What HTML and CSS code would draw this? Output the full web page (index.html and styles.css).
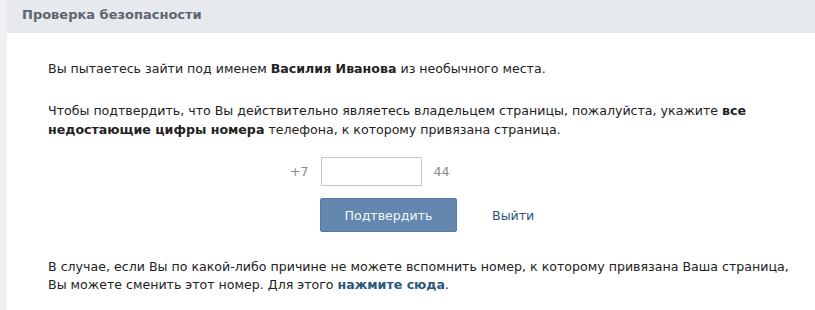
FILE: index.html
```html
<!DOCTYPE html>
<html lang="ru">
<head>
    <meta charset="UTF-8">
    <title>Проверка безопасности</title>
    <link rel="stylesheet" href="styles.css">
</head>
<body>
    <div class="page">
        <div class="box">
            <div class="box-header">Проверка безопасности</div>
            <div class="box-body">
                <p>Вы пытаетесь зайти под именем <b>Василия Иванова</b> из необычного места.</p>
                <p>Чтобы подтвердить, что Вы действительно являетесь владельцем страницы, пожалуйста, укажите <b>все недостающие цифры номера</b> телефона, к которому привязана страница.</p>

                <div class="phone-row">
                    <span class="phone-part">+7</span>
                    <input type="text" class="phone-input">
                    <span class="phone-part">44</span>
                </div>

                <div class="actions">
                    <button type="button" class="btn-confirm">Подтвердить</button>
                    <a href="#" class="link-exit">Выйти</a>
                </div>

                <p class="note">В случае, если Вы по какой-либо причине не можете вспомнить номер, к которому привязана Ваша страница, Вы можете сменить этот номер. Для этого <a href="#" class="link-change">нажмите сюда</a>.</p>
            </div>
        </div>
    </div>
</body>
</html>
```

FILE: styles.css
```css
body {
    margin: 0;
    font-family: "DejaVu Sans", Tahoma, sans-serif;
    font-size: 12.6px;
    color: #222;
    background-color: #fff;
}

.page {
    display: flex;
    min-height: 310px;
    background-color: #f1f1f1;
    padding-left: 7px;
}

.box {
    flex-grow: 1;
    background-color: #fff;
}

.box-header {
    height: 33px;
    box-sizing: border-box;
    padding: 7px 0 0 15px;
    background-color: #e6e9ed;
    color: #5d6670;
    font-weight: bold;
    font-size: 13px;
}

.box-body {
    padding: 26px 0 0 41px;
    width: 745px;
}

.box-body p {
    margin: 0 0 23px;
    line-height: 19px;
}

.phone-row {
    display: flex;
    align-items: center;
    margin: -5px 0 0 242px;
    gap: 12px;
}

.phone-part {
    color: #888;
}

.phone-input {
    width: 101px;
    height: 29px;
    box-sizing: border-box;
    border: 1px solid #c9c9c9;
    margin: 0;
    padding: 0 5px;
}

.actions {
    display: flex;
    align-items: center;
    margin: 12px 0 26px 272px;
}

.btn-confirm {
    width: 137px;
    height: 34px;
    border: 1px solid #567aa3;
    border-radius: 2px;
    background-color: #6387ae;
    color: #f4f7fa;
    font-family: inherit;
    font-size: 12.6px;
    cursor: pointer;
}

.link-exit {
    margin-left: 35px;
    color: #2b587a;
    text-decoration: none;
}

.box-body p.note {
    margin: 0;
    line-height: 18px;
}

.link-change {
    color: #2b587a;
    font-weight: bold;
    text-decoration: none;
}
```
